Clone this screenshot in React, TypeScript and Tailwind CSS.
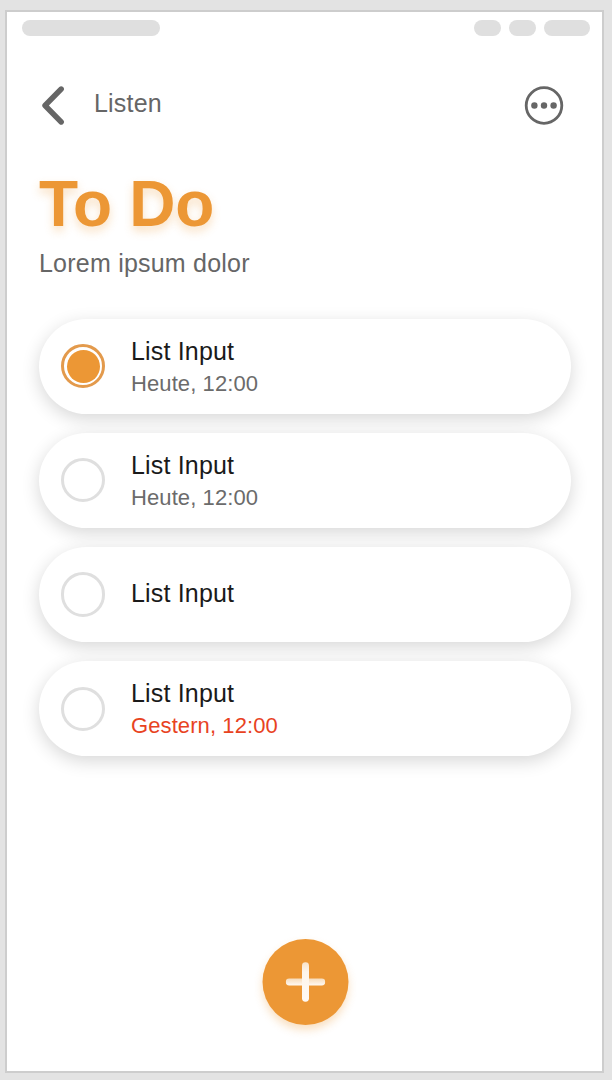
type Item = { title: string; due?: string; done?: boolean; overdue?: boolean };

const items: Item[] = [
  { title: "List Input", due: "Heute, 12:00", done: true },
  { title: "List Input", due: "Heute, 12:00" },
  { title: "List Input" },
  { title: "List Input", due: "Gestern, 12:00", overdue: true },
];

function StatusBar() {
  return (
    <div className="flex justify-between pl-[14.5px] pr-[12.5px] pt-2">
      <div className="h-4 w-[138px] rounded-full bg-[#dfdfdf]" />
      <div className="flex gap-2">
        <div className="h-4 w-[27px] rounded-full bg-[#dfdfdf]" />
        <div className="h-4 w-[27px] rounded-full bg-[#dfdfdf]" />
        <div className="h-4 w-[46px] rounded-full bg-[#dfdfdf]" />
      </div>
    </div>
  );
}

function Header() {
  return (
    <header className="mt-[49px] flex h-10 items-center pl-[34px] pr-[38.5px] text-[#666]">
      <button aria-label="Zurück">
        <svg width="25" height="40" viewBox="0 0 25 40" fill="none" stroke="currentColor" strokeWidth="5.4" strokeLinecap="round" strokeLinejoin="round">
          <path d="M20.2 4 L4 20.5 L20.2 37" />
        </svg>
      </button>
      <span className="ml-[28px] -mt-[4px] text-[25px] leading-8 tracking-[0.2px]">Listen</span>
      <button aria-label="Mehr" className="ml-auto">
        <svg width="40" height="40" viewBox="0 0 40 40">
          <circle cx="20" cy="20.5" r="17.8" fill="none" stroke="currentColor" strokeWidth="2.8" />
          <circle cx="10.4" cy="20.5" r="3.2" fill="currentColor" />
          <circle cx="20" cy="20.5" r="3.2" fill="currentColor" />
          <circle cx="29.6" cy="20.5" r="3.2" fill="currentColor" />
        </svg>
      </button>
    </header>
  );
}

function Radio({ done }: { done?: boolean }) {
  return done ? (
    <span className="flex size-[44.3px] shrink-0 items-center justify-center rounded-full border-3 border-[#e39a4c]">
      <span className="size-[33px] rounded-full bg-[#ec9735]" />
    </span>
  ) : (
    <span className="size-[44.3px] shrink-0 rounded-full border-3 border-[#dfdfdf]" />
  );
}

function Row({ item }: { item: Item }) {
  return (
    <li className="flex h-[95.3px] items-center rounded-full bg-white pl-[22px] shadow-[0_5px_18px_rgba(0,0,0,0.16)]">
      <Radio done={item.done} />
      <div className={item.due ? "ml-[25.7px] pt-[2px]" : "ml-[25.7px] pb-[3px]"}>
        <div className="text-[25px] leading-8 tracking-[0.18px] text-[#1a1a1a]">{item.title}</div>
        {item.due && (
          <div className={item.overdue ? "text-[22px] leading-[33px] tracking-[0.1px] text-[#e8431f]" : "text-[22px] leading-[33px] tracking-[0.1px] text-[#6b6b6b]"}>{item.due}</div>
        )}
      </div>
    </li>
  );
}

export default function App() {
  return (
    <div className="h-[1080px] w-[612px] overflow-hidden bg-[#e3e3e3] pl-[5px] pt-[10px] font-['Liberation_Sans',Arial,sans-serif]">
      <div className="flex h-[1063px] w-[599px] flex-col border-2 border-[#cdcdcd] bg-white">
        <StatusBar />
        <Header />
        <main className="flex flex-1 flex-col px-8">
          <h1 className="mt-[43px] text-[64px] font-bold leading-[72px] tracking-[-0.3px] text-[#ec9735] [text-shadow:0_5px_10px_rgba(236,151,53,0.3)]">To Do</h1>
          <p className="mt-[7px] text-[25px] leading-8 tracking-[0.22px] text-[#666]">Lorem ipsum dolor</p>
          <ul className="mt-[39.5px] -mr-[0.5px] flex flex-col gap-[18.9px]">
            {items.map((item, i) => (
              <Row key={i} item={item} />
            ))}
          </ul>
          <button aria-label="Neu" className="mx-auto mb-[46px] mt-auto flex size-[86px] translate-x-[0.5px] items-center justify-center rounded-full bg-[#ec9735] shadow-[0_5px_8px_rgba(236,151,53,0.3)]">
            <svg width="40" height="40" viewBox="0 0 40 40">
              <defs>
                <linearGradient id="bar" x1="0" y1="0" x2="0" y2="1">
                  <stop offset="0" stopColor="#f7dcbb" />
                  <stop offset="1" stopColor="#fffaf5" />
                </linearGradient>
                <linearGradient id="stem" x1="0" y1="0" x2="0" y2="1">
                  <stop offset="0" stopColor="#f9e3c9" />
                  <stop offset="0.25" stopColor="#fdf5eb" />
                  <stop offset="1" stopColor="#fffaf5" />
                </linearGradient>
              </defs>
              <rect x="0.3" y="16.6" width="39.4" height="6.9" rx="3.4" fill="url(#bar)" />
              <rect x="16.5" y="0.3" width="7" height="39.4" rx="3.4" fill="url(#stem)" />
            </svg>
          </button>
        </main>
      </div>
    </div>
  );
}
